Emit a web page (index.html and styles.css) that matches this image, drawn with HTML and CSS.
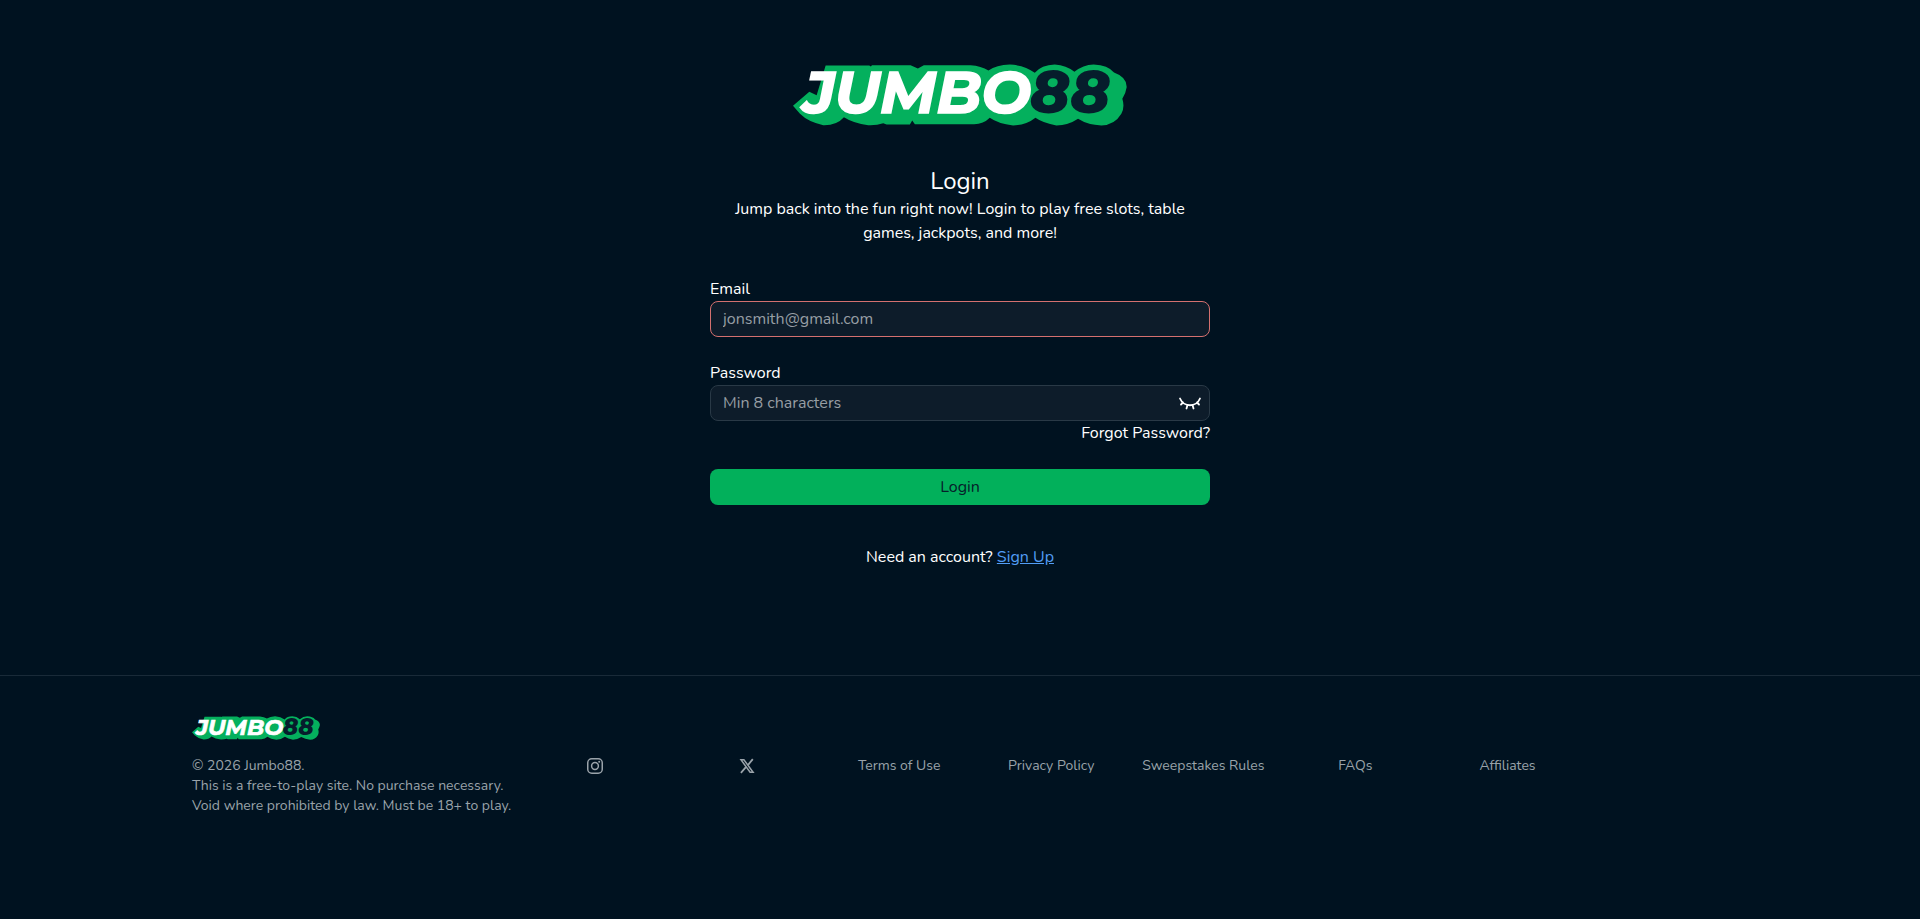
FILE: index.html
```html
<!DOCTYPE html>
<html lang="en">
<head>
<meta charset="utf-8">
<meta name="viewport" content="width=device-width, initial-scale=1">
<title>Login | Jumbo88</title>
<link rel="stylesheet" href="styles.css">
</head>
<body>
<main class="main">
  <a class="brand" href="#" aria-label="Jumbo88">
    <svg class="brand-logo" viewBox="39 41 1003 185">
      <path fill="#04b05d" d="M39 166 88 124 110 134 137 45H268L273 48 276 44H392L414 54 432 44H572Q604 46 626 60 650 43 690 42 735 44 765 67 785 43 825 42 860 44 884 64 910 43 942 42 985 44 1003 66 1042 80 1041 110 1038 130 1028 145 1036 170 1025 190 1005 224 965 225 925 224 895 205 865 225 830 225 790 218 767 202 740 224 700 225 655 220 630 202 610 222 580 221H405L397 210 390 222H320L310 218Q290 225 265 224 220 218 192 200 170 225 130 224 85 215 60 190Z"/>
      <text class="logo-word" x="70" y="188">JUMBO</text>
      <text class="logo-num" x="750" y="188">88</text>
    </svg>
  </a>
  <form class="login">
    <header class="intro">
      <h1 class="title">Login</h1>
      <p class="lead">Jump back into the fun right now! Login to play free slots, table games, jackpots, and more!</p>
    </header>
    <div class="field">
      <label class="label" for="email">Email</label>
      <input class="input input-error" id="email" type="email" placeholder="jonsmith@gmail.com">
    </div>
    <div class="field">
      <label class="label" for="password">Password</label>
      <div class="input password">
        <input class="password-input" id="password" type="password" placeholder="Min 8 characters">
        <button class="reveal" type="button" aria-label="Show password">
          <svg class="eye" viewBox="0 0 24 14" fill="none" stroke="currentColor" stroke-width="1.800" stroke-linecap="round"><path d="M2 2.500C6 11.500 18 11.500 22 2.500M5 6.500 3 8.500M9.500 9 8.500 12.500M14.500 9 15.500 12.500M19 6.500 21 8.500"/></svg>
        </button>
      </div>
      <a class="forgot" href="#">Forgot Password?</a>
    </div>
    <button class="submit" type="submit">Login</button>
    <p class="signup">Need an account? <a class="signup-link" href="#">Sign Up</a></p>
  </form>
</main>
<footer class="footer">
  <div class="footer-inner">
    <a class="footer-brand" href="#" aria-label="Jumbo88">
      <svg class="footer-logo" viewBox="39 41 1003 185">
        <path fill="#04b05d" d="M39 166 88 124 110 134 137 45H268L273 48 276 44H392L414 54 432 44H572Q604 46 626 60 650 43 690 42 735 44 765 67 785 43 825 42 860 44 884 64 910 43 942 42 985 44 1003 66 1042 80 1041 110 1038 130 1028 145 1036 170 1025 190 1005 224 965 225 925 224 895 205 865 225 830 225 790 218 767 202 740 224 700 225 655 220 630 202 610 222 580 221H405L397 210 390 222H320L310 218Q290 225 265 224 220 218 192 200 170 225 130 224 85 215 60 190Z"/>
        <text class="logo-word" x="70" y="188">JUMBO</text>
        <text class="logo-num" x="750" y="188">88</text>
      </svg>
    </a>
    <div class="footer-grid">
      <p class="legal">© 2026 Jumbo88.<br>This is a free-to-play site. No purchase necessary.<br>Void where prohibited by law. Must be 18+ to play.</p>
      <a class="footer-link" href="#" aria-label="Instagram"><svg class="social" viewBox="0 0 16 16" fill="none" stroke="currentColor" stroke-width="1.500"><rect x=".75" y=".75" width="14.500" height="14.500" rx="4"/><circle cx="8" cy="8" r="3.400"/><circle cx="12.200" cy="3.800" r="1" fill="currentColor" stroke="none"/></svg></a>
      <a class="footer-link" href="#" aria-label="X"><svg class="social" viewBox="0 0 16 16" fill="none" stroke="currentColor"><path stroke-width="1.500" d="M2 1.800H4.900L14.100 14.200H11.100Z"/><path stroke-width="1.800" d="M13.800 1.200 9.100 6.800M6.900 9.200 1.900 14.800"/></svg></a>
      <a class="footer-link" href="#">Terms of Use</a>
      <a class="footer-link" href="#">Privacy Policy</a>
      <a class="footer-link" href="#">Sweepstakes Rules</a>
      <a class="footer-link" href="#">FAQs</a>
      <a class="footer-link" href="#">Affiliates</a>
    </div>
  </div>
</footer>
</body>
</html>
```
FILE: styles.css
```css
* {
  box-sizing: border-box;
}

body {
  margin: 0;
  min-height: 100vh;
  background: #001220;
  color: #fff;
  font: 400 16px/24px Nunito, "Noto Sans", sans-serif;
}

h1,
p {
  margin: 0;
  font-weight: inherit;
}

a {
  color: inherit;
  text-decoration: none;
}

input,
button {
  font: inherit;
}

.logo-word {
  fill: #fff;
  stroke: #fff;
  stroke-width: 5px;
  font: italic 700 177px Montserrat, Inter, sans-serif;
}

.logo-num {
  fill: #061d2c;
  font: italic 800 181px Montserrat, Inter, sans-serif;
}

.main {
  display: flex;
  flex-direction: column;
  align-items: center;
  padding: 64px 16px 106px;
}

.brand-logo {
  display: block;
  width: 334px;
  height: 62px;
  overflow: visible;
}

.login {
  display: flex;
  flex-direction: column;
  width: 100%;
  max-width: 500px;
  margin-top: 40px;
}

.intro {
  padding: 0 16px;
  text-align: center;
}

.title {
  font-size: 24px;
  line-height: 31px;
}

.lead {
  margin-bottom: 32px;
}

.field {
  display: flex;
  flex-direction: column;
  margin-bottom: 24px;
}

.label {
  align-self: flex-start;
}

.input {
  width: 100%;
  height: 36px;
  padding: 0 12px;
  border: 1px solid #293946;
  border-radius: 8px;
  background: #0d1c2a;
  color: #fff;
}

.input-error {
  border-color: #d4706f;
}

.input::placeholder,
.password-input::placeholder {
  color: #979ea4;
  opacity: 1;
}

.password {
  display: flex;
  align-items: center;
  padding-right: 7px;
}

.password-input {
  flex: 1;
  min-width: 0;
  padding: 0;
  border: 0;
  outline: 0;
  background: none;
  color: inherit;
}

.reveal {
  padding: 0;
  border: 0;
  background: none;
  color: #fff;
}

.eye {
  display: block;
  width: 24px;
  height: 14px;
}

.forgot {
  align-self: flex-end;
}

.submit {
  height: 36px;
  border: 0;
  border-radius: 8px;
  background: #02b05b;
  color: #06202a;
}

.signup {
  margin-top: 40px;
  text-align: center;
}

.signup-link {
  color: #529df5;
  text-decoration: underline;
}

.footer {
  border-top: 1px solid #192a38;
}

.footer-inner {
  width: 80%;
  margin: 0 auto;
  padding: 40px 0;
  color: #9aa3aa;
  font-size: 14px;
  line-height: 20px;
}

.footer-logo {
  display: block;
  width: 128px;
  height: 24px;
  overflow: visible;
}

.footer-grid {
  display: grid;
  grid-template-columns: 43fr repeat(7, 20fr) 19fr;
  margin-top: 16px;
}

.footer-link {
  justify-self: center;
}

.legal {
  white-space: nowrap;
}

.social {
  display: block;
  width: 16px;
  height: 20px;
}
```
